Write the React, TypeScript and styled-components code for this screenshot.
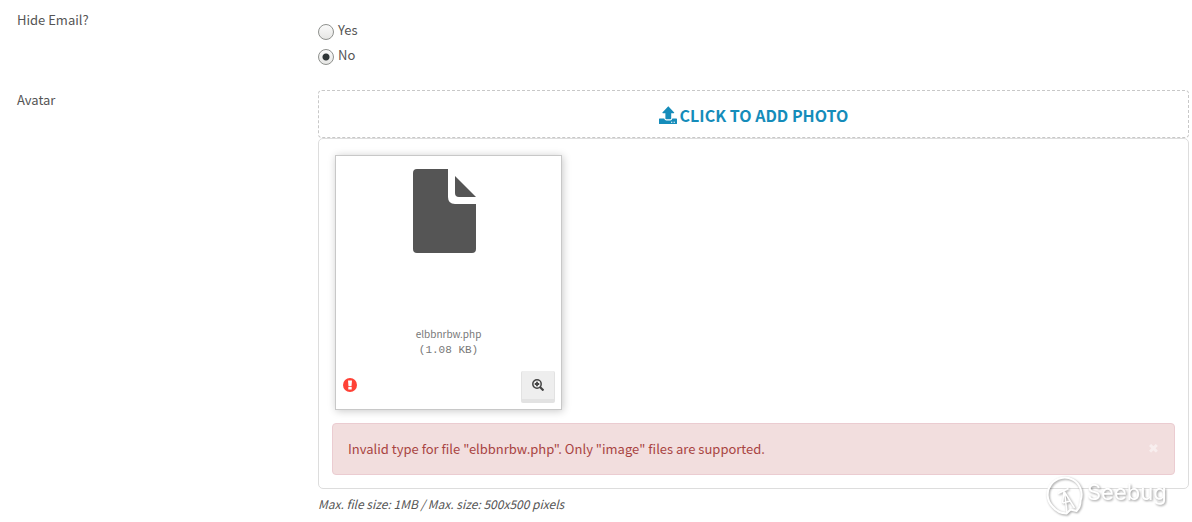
import React, { useState } from 'react';
import styled, { createGlobalStyle } from 'styled-components';

const Global = createGlobalStyle`
  *, *::before, *::after { box-sizing: border-box; }
  body {
    margin: 0;
    background: #fff;
    color: #555;
    font: 13px/20px "Noto Sans CJK SC", sans-serif;
  }
`;

const Form = styled.form`
  display: flex;
  flex-direction: column;
  gap: 15px;
  padding: 10px 3px 0 17px;
`;

const Row = styled.div`
  display: grid;
  grid-template-columns: 301px minmax(0, 1fr);
`;

const Label = styled.div``;

const Choices = styled.div`
  display: flex;
  flex-direction: column;
  gap: 5px;
  padding: 10px 0;
`;

const Choice = styled.label`
  display: flex;
  align-items: center;
  gap: 4px;
  height: 20px;
`;

const Radio = styled.input`
  appearance: none;
  width: 16px;
  height: 16px;
  margin: 4px 0 0;
  border: 1px solid #8f918e;
  border-radius: 50%;
  background: linear-gradient(#fafafa, #e6e6e4);
  &:checked {
    background: radial-gradient(circle, #2e3436 0 3px, transparent 4px), linear-gradient(#fafafa, #e6e6e4);
  }
`;

const DropButton = styled.button`
  display: flex;
  align-items: center;
  justify-content: center;
  gap: 3px;
  width: 100%;
  height: 48px;
  padding: 2px 0 0;
  border: 1px dashed #c8c8c8;
  border-radius: 4px;
  background: #fff;
  color: #158cba;
  font: bold 16px/24px "Noto Sans CJK SC", sans-serif;
`;

const Preview = styled.div`
  padding: 16px 13px 13px;
  border: 1px solid #ddd;
  border-radius: 5px;
`;

const FileCard = styled.figure`
  display: flex;
  flex-direction: column;
  width: 227px;
  height: 255px;
  margin: 0 0 13px 3px;
  padding: 13px 6px 6px;
  border: 1px solid #c8c8c8;
  box-shadow: 1px 1px 8px rgba(0, 0, 0, 0.22);
`;

const FileThumb = styled.svg`
  display: block;
  width: 63px;
  height: 84px;
  margin: 0 0 0 71px;
  fill: #555;
`;

const Caption = styled.figcaption`
  margin-top: auto;
  color: #777;
  font-size: 10px;
  line-height: 16px;
  text-align: center;
`;

const FileSize = styled.samp`
  display: block;
  font: 11px/16px "Liberation Mono", monospace;
`;

const CardFooter = styled.div`
  display: flex;
  align-items: flex-start;
  justify-content: space-between;
  margin-top: 13px;
`;

const ErrorMark = styled.svg`
  width: 14px;
  height: 14px;
  margin: 7px 0 0 1px;
`;

const ZoomButton = styled.button`
  display: flex;
  align-items: center;
  justify-content: center;
  width: 34px;
  height: 32px;
  padding: 0;
  border: solid #e2e2e2;
  border-width: 0 1px 4px;
  border-radius: 2px;
  background: #eee;
`;

const Alert = styled.div`
  display: flex;
  align-items: center;
  justify-content: space-between;
  height: 52px;
  padding: 0 15px;
  border: 1px solid #ebccd1;
  border-radius: 4px;
  background: #f2dede;
  color: #a94442;
`;

const CloseButton = styled.button`
  padding: 0;
  border: 0;
  background: none;
  color: #fff;
  opacity: 0.5;
  font: 13px/20px "DejaVu Sans", sans-serif;
`;

const Hint = styled.em`
  display: block;
  margin-top: 5px;
  font-size: 12px;
`;

const Watermark = styled.svg`
  position: absolute;
  top: 472px;
  right: 22px;
  width: 124px;
  height: 46px;
  filter: drop-shadow(1px 1px 1px rgba(0, 0, 0, 0.4));
  pointer-events: none;
`;

export default function App() {
  const [hidden, setHidden] = useState('no');
  return (
    <>
      <Global />
      <Form>
        <Row>
          <Label id="hide-email">Hide Email?</Label>
          <Choices role="radiogroup" aria-labelledby="hide-email">
            <Choice>
              <Radio type="radio" name="hide" checked={hidden === 'yes'} onChange={() => setHidden('yes')} />
              Yes
            </Choice>
            <Choice>
              <Radio type="radio" name="hide" checked={hidden === 'no'} onChange={() => setHidden('no')} />
              No
            </Choice>
          </Choices>
        </Row>
        <Row>
          <Label>Avatar</Label>
          <div>
            <DropButton type="button">
              <svg width="18" height="18" viewBox="0 0 18 18" fill="currentColor" aria-hidden="true">
                <path d="M9.300 0.200l5.900 6.300q.3.700-.6.700h-2.400v5.300q0 .8-.8.800H7.200q-.8 0-.8-.8V7.200H4q-.9 0-.6-.7z" />
                <path d="M.6 12.500h4.600q.6 2 2.200 2h3.800q1.600 0 2.200-2h4q.6 0 .6.600v4.300q0 .6-.6.600H.6q-.6 0-.6-.6v-4.300q0-.6.600-.6z" />
                <path d="M12 15.800h1.300v1H12zM14.600 15.800h1.300v1h-1.300z" fill="#fff" />
              </svg>
              CLICK TO ADD PHOTO
            </DropButton>
            <Preview>
              <FileCard>
                <FileThumb viewBox="0 0 63 84" aria-hidden="true">
                  <path d="M4 0h31v28q0 7 7 7h21v45q0 4-4 4H4q-4 0-4-4V4q0-4 4-4z" />
                  <path d="M42 7l21 21H46q-4 0-4-4z" />
                </FileThumb>
                <Caption>
                  elbbnrbw.php
                  <FileSize>(1.08 KB)</FileSize>
                </Caption>
                <CardFooter>
                  <ErrorMark viewBox="0 0 14 14" role="img" aria-label="Error">
                    <circle cx="7" cy="7" r="7" fill="#ff4136" />
                    <path d="M5 2.500h4l-.5 5.700h-3zM5.300 9h3.400v2.600H5.300z" fill="#fff" />
                  </ErrorMark>
                  <ZoomButton type="button" aria-label="View details">
                    <svg width="12" height="12" viewBox="0 0 12 12" fill="none" stroke="#444" aria-hidden="true">
                      <circle cx="5" cy="5" r="4.200" strokeWidth="1.500" />
                      <path d="M2.800 5h4.400M5 2.800v4.400" strokeWidth="1.800" />
                      <path d="M8 8l3.500 3.500" strokeWidth="2.200" />
                    </svg>
                  </ZoomButton>
                </CardFooter>
              </FileCard>
              <Alert role="alert">
                <span>Invalid type for file "elbbnrbw.php". Only "image" files are supported.</span>
                <CloseButton type="button" aria-label="Close">✖</CloseButton>
              </Alert>
            </Preview>
            <Hint>Max. file size: 1MB / Max. size: 500x500 pixels</Hint>
          </div>
        </Row>
      </Form>
      <Watermark viewBox="0 0 124 46" role="img" aria-label="Seebug">
        <path
          d="M20.500 41.500A19 19 0 0 1 6.500 34.500A17 17 0 1 1 34.500 28.500Q34.500 35 30.500 39L24.500 37.500z"
          fill="none"
          stroke="#fff"
          strokeWidth="2"
          strokeLinejoin="round"
        />
        <path
          d="M12 21.500L22.500 16.500M18 19.500L16.500 31M18.500 20L28.500 36M18.500 20L21 41M17 31L24 29"
          fill="none"
          stroke="#fff"
          strokeWidth="1.500"
        />
        <text x="41" y="28" fill="#fff" fontFamily="Inter, sans-serif" fontSize="22">Seebug</text>
      </Watermark>
    </>
  );
}
